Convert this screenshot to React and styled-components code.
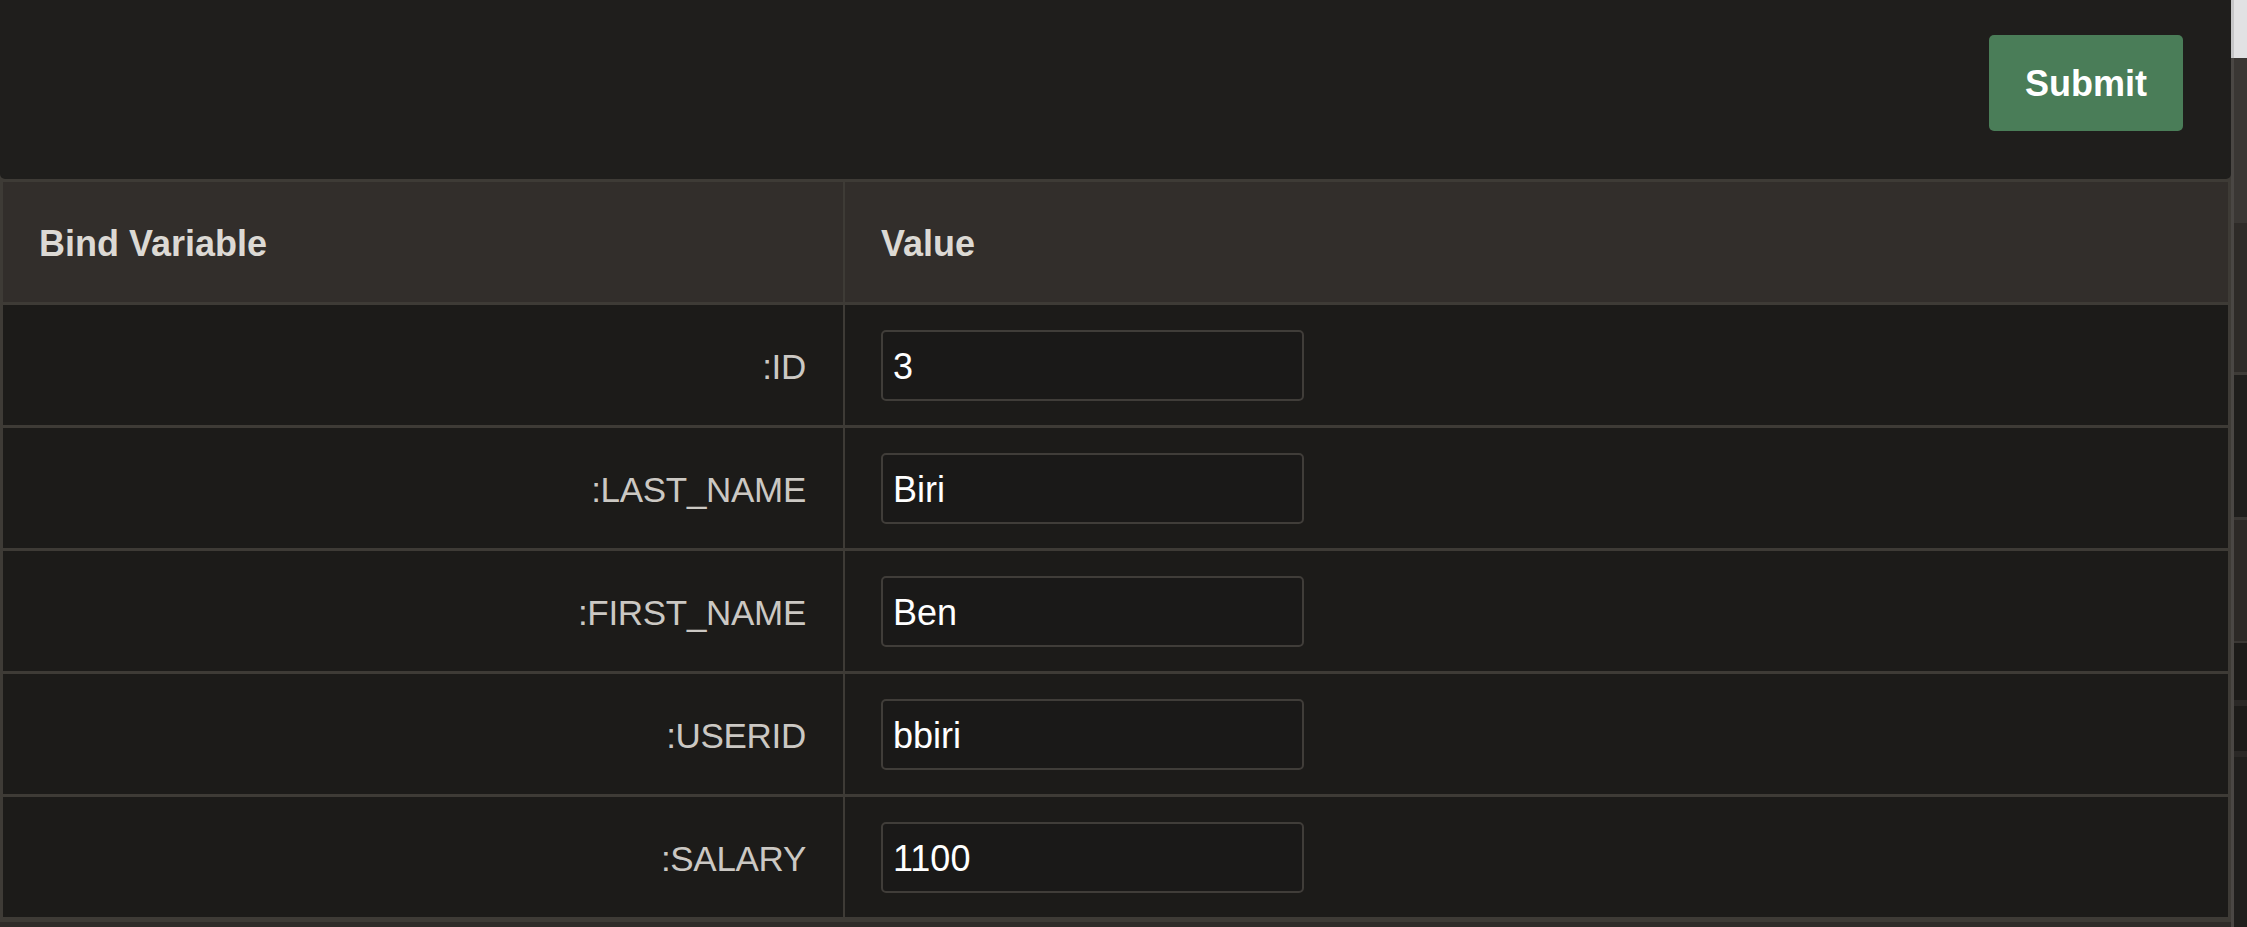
import styled, { createGlobalStyle } from "styled-components";

const GlobalStyle = createGlobalStyle`
  html, body {
    margin: 0;
    padding: 0;
    background: #1f1e1c;
    font-family: "Liberation Sans", Arial, sans-serif;
    overflow: hidden;
  }
`;

const bindings = [
  { name: ":ID", value: "3" },
  { name: ":LAST_NAME", value: "Biri" },
  { name: ":FIRST_NAME", value: "Ben" },
  { name: ":USERID", value: "bbiri" },
  { name: ":SALARY", value: "1100" },
];

const sideBands = [
  { h: 58, bg: "#e1e1e3", edge: "#c6c6c8" },
  { h: 165, bg: "#3a3734", edge: "#4a4744" },
  { h: 149, bg: "#2e2b28", edge: "#4a4744" },
  { h: 3, bg: "#3e3b37", edge: "#4a4744" },
  { h: 142, bg: "#1f1e1c", edge: "#4a4744" },
  { h: 3, bg: "#3a3734", edge: "#4a4744" },
  { h: 121, bg: "#2c2926", edge: "#4a4744" },
  { h: 2, bg: "#3a3734", edge: "#4a4744" },
  { h: 57, bg: "#1c1b19", edge: "#4a4744" },
  { h: 6, bg: "#2a2826", edge: "#4a4744" },
  { h: 45, bg: "#1c1b19", edge: "#4a4744" },
  { h: 6, bg: "#2a2826", edge: "#4a4744" },
  { h: 170, bg: "#201f1d", edge: "#4a4744" },
];

export default function App() {
  return (
    <>
      <GlobalStyle />
      <Page>
        <Main>
          <Toolbar>
            <SubmitButton type="button">Submit</SubmitButton>
          </Toolbar>
          <BindTable>
            <HeadCell>Bind Variable</HeadCell>
            <HeadCell>Value</HeadCell>
            {bindings.map((b) => (
              <Row key={b.name}>
                <NameCell>{b.name}</NameCell>
                <ValueCell>
                  <ValueInput defaultValue={b.value} />
                </ValueCell>
              </Row>
            ))}
          </BindTable>
          <Footer />
        </Main>
        <SideStrip>
          {sideBands.map((band, i) => (
            <Band key={i} $h={band.h} $bg={band.bg} $edge={band.edge} />
          ))}
        </SideStrip>
      </Page>
    </>
  );
}

const Page = styled.div`
  display: flex;
  width: 2247px;
  height: 927px;
`;

const Main = styled.div`
  width: 2231px;
  display: flex;
  flex-direction: column;
  background: #3e3b36;
`;

const Toolbar = styled.div`
  height: 179px;
  box-sizing: border-box;
  display: flex;
  justify-content: flex-end;
  align-items: flex-start;
  padding: 35px 48px 0 0;
  background: #1f1e1c;
  border-radius: 0 0 5px 5px;
`;

const SubmitButton = styled.button`
  height: 96px;
  padding: 2px 36px 0;
  border: none;
  border-radius: 5px;
  background: #4a7d58;
  color: #ffffff;
  font-family: "Liberation Sans", Arial, sans-serif;
  font-weight: 700;
  font-size: 36px;
  cursor: pointer;
`;

const BindTable = styled.div`
  display: grid;
  grid-template-columns: 840px 1fr;
  grid-auto-rows: 120px;
  column-gap: 2px;
  row-gap: 3px;
  padding: 3px 3px 5px 3px;
  background: #3e3b36;
`;

const Row = styled.div`
  display: contents;
`;

const HeadCell = styled.div`
  display: flex;
  align-items: center;
  padding: 3px 36px 0;
  background: #322e2b;
  color: #dcd9d4;
  font-weight: 700;
  font-size: 36px;
`;

const NameCell = styled.div`
  display: flex;
  align-items: center;
  justify-content: flex-end;
  padding: 3px 37px 0;
  background: #1c1b19;
  color: #cbc8c3;
  font-size: 35px;
  letter-spacing: -0.3px;
`;

const ValueCell = styled.div`
  display: flex;
  align-items: center;
  padding: 0 36px;
  background: #1c1b19;
`;

const ValueInput = styled.input`
  width: 423px;
  height: 71px;
  box-sizing: border-box;
  padding: 3px 10px 0;
  border: 2px solid #403d39;
  border-radius: 5px;
  background: #1a1918;
  color: #ffffff;
  font-family: "Liberation Sans", Arial, sans-serif;
  font-size: 36px;
  outline: none;
`;

const Footer = styled.div`
  flex: 1;
  background: #2f2c29;
`;

const SideStrip = styled.div`
  width: 16px;
  display: flex;
  flex-direction: column;
`;

const Band = styled.div`
  height: ${(p) => p.$h}px;
  flex-shrink: 0;
  background: ${(p) => p.$bg};
  border-left: 3px solid ${(p) => p.$edge};
`;
